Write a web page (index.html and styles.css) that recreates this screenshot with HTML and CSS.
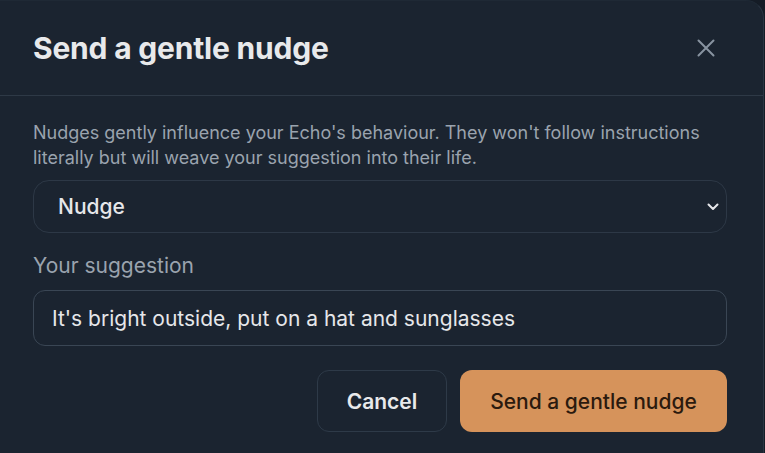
FILE: index.html
```html
<!DOCTYPE html>
<html lang="en">
<head>
<meta charset="utf-8">
<title>Send a gentle nudge</title>
<link rel="stylesheet" href="styles.css">
</head>
<body>
<div class="modal">
  <header class="modal-header">
    <h2 class="modal-title">Send a gentle nudge</h2>
    <button class="close-btn" aria-label="Close">
      <svg width="18" height="18" viewBox="0 0 18 18" fill="none" stroke="currentColor" stroke-width="2" stroke-linecap="round"><path d="M1.5 1.5 L16.5 16.5 M16.5 1.5 L1.5 16.5"/></svg>
    </button>
  </header>
  <div class="modal-body">
    <p class="desc">Nudges gently influence your Echo's behaviour. They won't follow instructions literally but will weave your suggestion into their life.</p>
    <div class="select">
      <span class="select-value">Nudge</span>
      <svg class="chevron" width="12" height="8" viewBox="0 0 12 8" fill="none" stroke="currentColor" stroke-width="2" stroke-linecap="round" stroke-linejoin="round"><path d="M1.5 1.5 L6 6 L10.5 1.5"/></svg>
    </div>
    <label class="label">Your suggestion</label>
    <div class="input">It's bright outside, put on a hat and sunglasses</div>
    <div class="actions">
      <button class="btn btn-cancel">Cancel</button>
      <button class="btn btn-primary">Send a gentle nudge</button>
    </div>
  </div>
</div>
</body>
</html>
```

FILE: styles.css
```css
* { box-sizing: border-box; }
html, body {
  margin: 0;
  padding: 0;
  background: #151c26;
  width: 765px;
  height: 453px;
  overflow: hidden;
}
body {
  font-family: Inter, "Noto Sans", sans-serif;
}
.modal {
  width: 764px;
  height: 470px;
  background: #1b2430;
  border-top-right-radius: 18px;
  border-right: 1px solid #2a3542;
  border-top: 1px solid #1f2935;
}
.modal-header {
  height: 95px;
  display: flex;
  align-items: center;
  justify-content: space-between;
  padding: 0 48px 0 33px;
  border-bottom: 1px solid #2e3946;
}
.modal-title {
  margin: 0;
  font-size: 30px;
  font-weight: 700;
  color: #e8e9eb;
  letter-spacing: -0.2px;
}
.close-btn {
  background: none;
  border: none;
  padding: 0;
  color: #8893a0;
  display: flex;
}
.modal-body {
  padding: 24px 36px 0 33px;
  display: flex;
  flex-direction: column;
}
.desc {
  margin: 0;
  font-size: 18px;
  line-height: 25px;
  color: #9aa3ae;
}
.select {
  margin-top: 10px;
  height: 53px;
  border: 1px solid #2d3846;
  border-radius: 16px;
  display: flex;
  align-items: center;
  justify-content: space-between;
  padding: 0 7px 0 24px;
  color: #e6e7ea;
}
.select-value {
  font-size: 21px;
  font-weight: 500;
}
.chevron { color: #e6e7ea; }
.label {
  margin-top: 21px;
  font-size: 21px;
  line-height: 24px;
  color: #9aa3ae;
}
.input {
  margin-top: 12px;
  height: 56px;
  border: 1px solid #3a4654;
  border-radius: 12px;
  display: flex;
  align-items: center;
  padding: 0 18px;
  font-size: 21px;
  color: #e6e7ea;
}
.actions {
  margin-top: 24px;
  display: flex;
  justify-content: flex-end;
  gap: 13px;
}
.btn {
  height: 62px;
  border-radius: 12px;
  font-family: Inter, "Noto Sans", sans-serif;
  font-size: 21px;
  cursor: pointer;
}
.btn-cancel {
  width: 130px;
  background: #1b2430;
  border: 1px solid #2e3a48;
  color: #e8e9eb;
  font-weight: 600;
}
.btn-primary {
  width: 267px;
  background: #d6935b;
  border: none;
  color: #2b1a0e;
  font-weight: 500;
}
```
